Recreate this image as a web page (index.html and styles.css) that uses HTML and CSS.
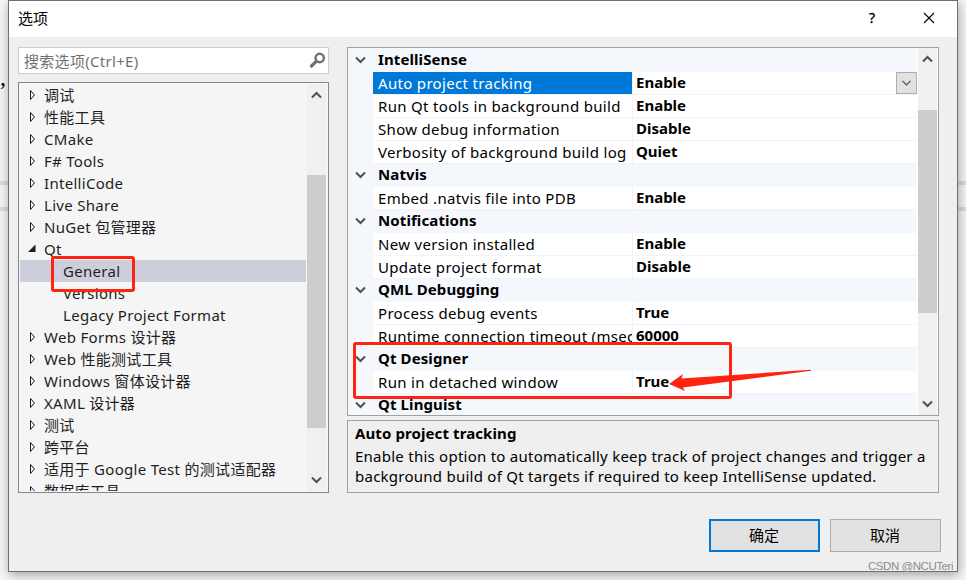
FILE: index.html
```html
<!DOCTYPE html>
<html lang="zh-CN">
<head>
    <meta charset="UTF-8">
    <meta name="viewport" content="width=device-width, initial-scale=1.0">
    <title>选项</title>
    <link rel="stylesheet" href="styles.css">
</head>
<body>
    <div class="backdrop">
        <span class="comma">,</span>
        <div class="line line-1"></div>
        <div class="line line-2"></div>
    </div>

    <div class="dialog">
        <div class="titlebar">
            <span class="title">选项</span>
            <span class="help">?</span>
            <svg class="close" width="12" height="12" viewBox="0 0 12 12"><path d="M1 1L11 11M11 1L1 11" stroke="#000" stroke-width="1.1" fill="none"/></svg>
        </div>

        <div class="content">
            <div class="left">
                <div class="search">
                    <span>搜索选项(Ctrl+E)</span>
                    <svg width="17" height="17" viewBox="0 0 17 17"><circle cx="10.7" cy="6" r="4.2" fill="none" stroke="#717171" stroke-width="2.4"/><path d="M7.5 9.2L1.5 15" stroke="#717171" stroke-width="3.2" fill="none"/></svg>
                </div>
                <div class="tree">
                    <ul id="tree" class="tree-list"></ul>
                    <div class="scrollbar">
                        <svg class="arrow" width="11" height="8" viewBox="0 0 11 8"><path d="M1 6.5L5.5 2L10 6.5" fill="none" stroke="#505050" stroke-width="2"/></svg>
                        <div class="thumb tree-thumb"></div>
                        <svg class="arrow" width="11" height="8" viewBox="0 0 11 8"><path d="M1 1.5L5.5 6L10 1.5" fill="none" stroke="#505050" stroke-width="2"/></svg>
                    </div>
                </div>
            </div>

            <div class="right">
                <div class="grid">
                    <div id="props" class="props"></div>
                    <div class="scrollbar">
                        <svg class="arrow" width="11" height="8" viewBox="0 0 11 8"><path d="M1 6.5L5.5 2L10 6.5" fill="none" stroke="#505050" stroke-width="2"/></svg>
                        <div class="thumb grid-thumb"></div>
                        <svg class="arrow" width="11" height="8" viewBox="0 0 11 8"><path d="M1 1.5L5.5 6L10 1.5" fill="none" stroke="#505050" stroke-width="2"/></svg>
                    </div>
                </div>
                <div class="description">
                    <b>Auto project tracking</b>
                    <p>Enable this option to automatically keep track of project changes and trigger a<br>background build of Qt targets if required to keep IntelliSense updated.</p>
                </div>
            </div>
        </div>

        <div class="buttons">
            <button type="button" class="ok">确定</button>
            <button type="button">取消</button>
        </div>
    </div>

    <div class="mark mark-general"></div>
    <div class="mark mark-designer"></div>
    <svg class="pointer" width="144" height="26" viewBox="0 0 144 26"><path d="M0 15L14 5L12.5 9.5L142 .8L142 1.8L14 18.5L16 22Z" fill="#ff2412"/></svg>
    <div class="watermark">CSDN @NCUTeri</div>

    <script src="script.js"></script>
</body>
</html>
```

FILE: styles.css
```css
* {
    box-sizing: border-box;
}

body {
    margin: 0;
    width: 966px;
    height: 580px;
    overflow: hidden;
    position: relative;
    background-color: #f7f7f7;
    font-family: "Noto Sans", "Noto Sans CJK SC", sans-serif;
    font-size: 15px;
    color: #000;
    padding-left: 8px;
}

.backdrop {
    position: absolute;
    left: 0;
    top: 0;
    width: 966px;
    height: 580px;
}

.comma {
    position: absolute;
    left: 0;
    top: 64px;
    font-family: "Liberation Serif", serif;
    font-size: 24px;
}

.line {
    position: absolute;
    left: 0;
    width: 966px;
    height: 4px;
    background-color: #dcdce4;
}

.line-1 {
    top: 181px;
}

.line-2 {
    top: 207px;
}

.dialog {
    position: relative;
    width: 950px;
    height: 572px;
    border: 1px solid #707070;
    background-color: #efefef;
    box-shadow: 1px 3px 11px rgba(0, 0, 0, 0.35);
}

.titlebar {
    display: flex;
    align-items: center;
    height: 36px;
    padding: 0 22px 0 9px;
    background-color: #fff;
    line-height: 20px;
}

.title {
    flex: 1;
    padding-bottom: 2px;
}

.help {
    font-size: 14px;
    margin-right: 48px;
    padding-bottom: 3px;
    -webkit-text-stroke: 0.3px #000;
}

.close {
    margin-bottom: 2px;
}

.content {
    display: flex;
    justify-content: space-between;
    padding: 10px 18px 0 9px;
}

.left {
    width: 311px;
}

.search {
    display: flex;
    align-items: center;
    justify-content: space-between;
    height: 27px;
    padding: 0 2px 0 5px;
    margin-bottom: 8px;
    border: 1px solid #cccedb;
    background-color: #fff;
    color: #717171;
    line-height: 24px;
    letter-spacing: 0.3px;
}

.tree {
    display: flex;
    height: 411px;
    padding: 1px;
    border: 1px solid #828790;
    background-color: #f5f5f5;
}

.tree-list {
    flex: 1;
    margin: 0 1px 0 0;
    padding: 0;
    overflow: hidden;
    list-style: none;
    color: #1e1e1e;
    letter-spacing: 0.3px;
}

.tree-list li {
    display: flex;
    align-items: center;
    height: 22px;
    line-height: 22px;
    white-space: nowrap;
}

.tree-list svg {
    width: 10px;
    height: 12px;
    margin: 0 7px 0 7px;
    flex: none;
}

.tree-list .child {
    padding-left: 43px;
}

.tree-list .selected {
    background-color: #cccedb;
}

.scrollbar {
    display: flex;
    flex-direction: column;
    align-items: center;
    width: 19px;
    flex: none;
    background-color: #f0f0f0;
}

.tree .scrollbar {
    margin-right: 1px;
    padding: 7px 0 7px;
}

.grid .scrollbar {
    margin: 0 1px;
    padding: 7px 0;
}

.arrow {
    flex: none;
}

.thumb {
    width: 19px;
    background-color: #cdcdcd;
}

.tree-thumb {
    height: 253px;
    margin: 76px 0 auto;
}

.grid-thumb {
    height: 203px;
    margin: 47px 0 auto;
}

.right {
    width: 592px;
}

.grid {
    display: flex;
    height: 369px;
    border: 1px solid #a0a0a0;
    background-color: #fff;
}

.props {
    flex: 1;
    padding-top: 1px;
    overflow: hidden;
    background-color: #f4f7fc;
}

.category {
    display: flex;
    align-items: center;
    height: 23px;
    padding: 0 0 1px 7px;
    font-weight: bold;
    line-height: 20px;
    letter-spacing: 0.1px;
}

.category span {
    padding-bottom: 2px;
}

.category svg {
    margin-right: 12px;
}

.prop {
    display: flex;
    height: 23px;
    margin-left: 25px;
    border-bottom: 1px solid #f0f3f9;
    background-color: #fff;
    line-height: 20px;
    white-space: nowrap;
}

.name {
    width: 260px;
    padding-left: 5px;
    border-right: 1px solid #f0f3f9;
    overflow: hidden;
    line-height: 22px;
    letter-spacing: 0.32px;
}

.value {
    flex: 1;
    padding-left: 3px;
    font-weight: bold;
}

.prop.selected .name {
    background-color: #0078d7;
    color: #fff;
}

.dropdown {
    display: flex;
    align-items: center;
    justify-content: center;
    width: 21px;
    height: 22px;
    border: 1px solid #adadad;
    background-color: #e1e1e1;
}

.description {
    height: 73px;
    margin-top: 4px;
    padding: 2px 7px;
    border: 1px solid #a0a0a0;
    white-space: nowrap;
    line-height: 20px;
}

.description b {
    display: block;
    letter-spacing: 0.1px;
}

.description p {
    margin: 3px 0 0;
    letter-spacing: 0.25px;
}

.buttons {
    display: flex;
    justify-content: flex-end;
    gap: 10px;
    padding: 26px 16px 0 0;
}

.buttons button {
    width: 111px;
    height: 33px;
    padding: 0 1px 1px 0;
    border: 1px solid #adadad;
    background-color: #e1e1e1;
    font: inherit;
    line-height: 20px;
    color: #000;
}

.buttons .ok {
    border: 2px solid #0078d7;
}

.mark {
    position: absolute;
    border: 3px solid #ff2412;
    border-radius: 3px;
}

.mark-general {
    left: 51px;
    top: 256px;
    width: 84px;
    height: 36px;
}

.mark-designer {
    left: 353px;
    top: 342px;
    width: 379px;
    height: 57px;
}

.pointer {
    position: absolute;
    left: 669px;
    top: 369px;
}

.watermark {
    position: absolute;
    left: 868px;
    top: 558px;
    font-family: "Liberation Sans", sans-serif;
    font-size: 11.5px;
    line-height: 16px;
    letter-spacing: -0.45px;
    color: #8c8c8c;
}
```

FILE: script.js
```js
const nodes = [
    ['调试'], ['性能工具'], ['CMake'], ['F# Tools'], ['IntelliCode'], ['Live Share'],
    ['NuGet 包管理器'], ['Qt', 'open'], ['General', 'child selected'], ['Versions', 'child'],
    ['Legacy Project Format', 'child'], ['Web Forms 设计器'], ['Web 性能测试工具'],
    ['Windows 窗体设计器'], ['XAML 设计器'], ['测试'], ['跨平台'],
    ['适用于 Google Test 的测试适配器'], ['数据库工具']
];

// a string is a category, a pair is a property and its value
const props = [
    'IntelliSense',
    ['Auto project tracking', 'Enable'],
    ['Run Qt tools in background build', 'Enable'],
    ['Show debug information', 'Disable'],
    ['Verbosity of background build log', 'Quiet'],
    'Natvis',
    ['Embed .natvis file into PDB', 'Enable'],
    'Notifications',
    ['New version installed', 'Enable'],
    ['Update project format', 'Disable'],
    'QML Debugging',
    ['Process debug events', 'True'],
    ['Runtime connection timeout (msecs)', '60000'],
    'Qt Designer',
    ['Run in detached window', 'True'],
    'Qt Linguist'
];

const closedIcon = '<svg viewBox="0 0 10 12"><path d="M3.5 1.5V10.5L7.5 6Z" fill="none" stroke="#1e1e1e"/></svg>';
const openIcon = '<svg viewBox="0 0 10 12"><path d="M8.5 1.5V9H1Z" fill="#1e1e1e"/></svg>';
const chevron = '<svg width="11" height="8" viewBox="0 0 11 8"><path d="M1 1.5L5.5 6L10 1.5" fill="none" stroke="#505050" stroke-width="2"/></svg>';
const dropdown = '<span class="dropdown"><svg width="9" height="6" viewBox="0 0 9 6"><path d="M.5 .8L4.5 4.8L8.5 .8" fill="none" stroke="#505050" stroke-width="1.2"/></svg></span>';

document.getElementById('tree').innerHTML = nodes.map(([text, type = '']) => {
    const icon = type.includes('child') ? '' : type === 'open' ? openIcon : closedIcon;
    return `<li class="${type}">${icon}<span>${text}</span></li>`;
}).join('');

document.getElementById('props').innerHTML = props.map((item, i) => {
    if (typeof item === 'string') {
        return `<div class="category">${chevron}<span>${item}</span></div>`;
    }
    const selected = i === 1;
    return `<div class="prop${selected ? ' selected' : ''}"><span class="name">${item[0]}</span><span class="value">${item[1]}</span>${selected ? dropdown : ''}</div>`;
}).join('');
```
